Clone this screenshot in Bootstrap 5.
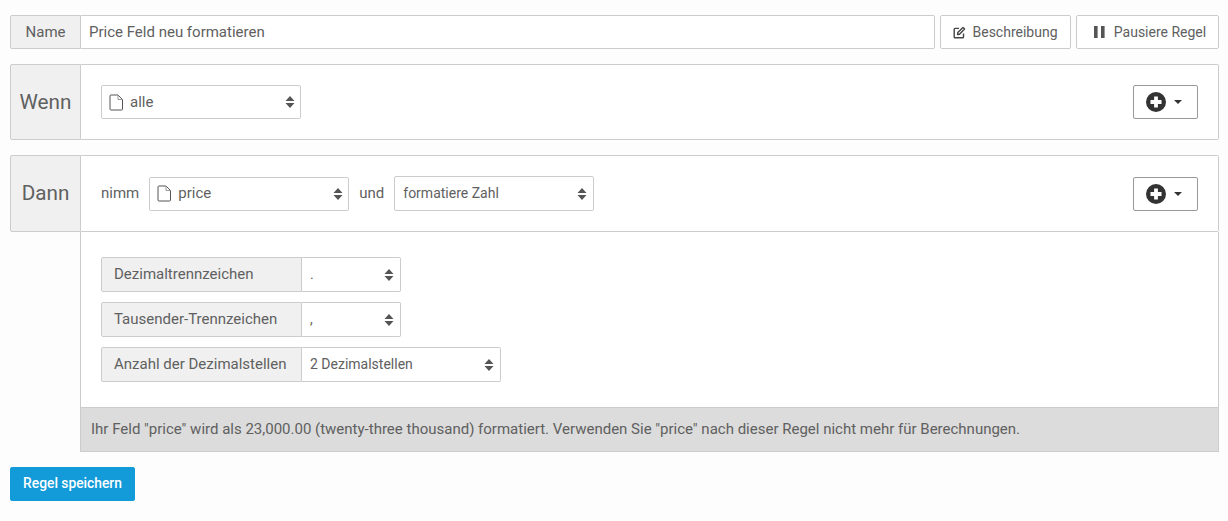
<!DOCTYPE html>
<html lang="de">
<head>
<meta charset="utf-8">
<title>Regel</title>
<link href="https://cdn.jsdelivr.net/npm/bootstrap@5.3.0/dist/css/bootstrap.min.css" rel="stylesheet">
<style>
html,body{height:521px;overflow:hidden}
body{background:#fdfdfd;font-family:Roboto,"Liberation Sans",sans-serif;font-size:15px;color:#606060}
.page-wrap{padding:15px 9px 0 10px}
.tag-cell{background:#f0f0f0;border:1px solid #ccc;color:#606060;display:flex;align-items:center;justify-content:center;border-radius:2px 0 0 2px}
.name-row{height:34px;margin-bottom:15px;gap:5px}
.name-tag{width:71px;font-size:15px}
.name-input{flex:1;height:34px;border:1px solid #ccc;border-left:0;background:#fff;color:#606060;padding:0 8px;font-size:15px;border-radius:0 2px 2px 0;margin-left:-5px;display:flex;align-items:center}
.plain-btn{height:34px;background:#fff;border:1px solid #ccc;border-radius:2px;color:#606060;font-size:14px;padding:0;display:flex;align-items:center;justify-content:center}
.btn-desc{width:131px;gap:6px}
.btn-pause{width:143px;gap:9px;padding-left:5px}
.rule-row{height:76px;margin-bottom:15px}
.rule-row.then-row{height:77px;margin-bottom:0}
.rule-tag{width:71px;font-size:20.7px;padding-top:1px}
.rule-body{flex:1;background:#fff;border:1px solid #ccc;border-left:0;border-radius:0 2px 2px 0;padding:0 20px;display:flex;align-items:center}
.fake-select{position:relative;height:34px;background:#fff;border:1px solid #ccc;border-radius:2px;color:#606060;display:flex;align-items:center;padding-left:7px;gap:7px}
.sel-tall{height:35px;padding-left:8px;font-size:14px}
.sel-tall .updown{right:6px}
.w-200{width:200px}.w-100px{width:100px}
.w-199{width:199px}.w-99{width:99px}
.updown{position:absolute;right:5px;top:50%;margin-top:-6px}
.word{margin:0 10px;color:#606060}
.word-first{margin:0 10px 0 0}
.add-btn{margin-left:auto;width:65px;height:34px;background:#fff;border:1px solid #999;border-radius:2px;display:flex;align-items:center;justify-content:center;gap:8px;padding:0 3px 0 0}
.caret-down{width:0;height:0;border:4.5px solid transparent;border-top-color:#333;border-bottom:0}
.detail-panel{margin-left:70px;background:#fff;border:1px solid #ccc;border-top:0}
.detail-inner{padding:25px 20px;display:flex;flex-direction:column;gap:10px}
.opt-group{display:flex;height:35px}
.opt-label{width:201px;background:#f0f0f0;border:1px solid #ccc;color:#606060;display:flex;align-items:center;padding-left:12px;border-radius:2px 0 0 2px}
.opt-group .fake-select{height:35px;border-left:0;border-radius:0 2px 2px 0;font-size:14px;padding-left:8px}
.opt-group .updown{right:6px}
.note-bar{background:#dcdcdc;height:45px;display:flex;align-items:center;padding-left:10px;border-top:1px solid #ccc;margin:0 -1px -1px;border-left:1px solid #ccc;border-right:1px solid #ccc;border-bottom:1px solid #ccc}
.save-btn{margin-top:15px;width:125px;height:34px;background:#129ad9;border:1px solid #129ad9;color:#fff;font-size:13.8px;font-weight:500;border-radius:2px;padding:0 0 2px}
</style>
</head>
<body>
<div class="page-wrap">
  <div class="d-flex name-row">
    <div class="tag-cell name-tag">Name</div>
    <div class="name-input">Price Feld neu formatieren</div>
    <button class="plain-btn btn-desc" type="button">
      <svg width="13" height="13" viewBox="0 0 13 13" fill="none" stroke="#444" stroke-width="1.4"><path d="M10.5 7.5v3.5a.8.8 0 0 1-.8.8H2a.8.8 0 0 1-.8-.8V3.2a.8.8 0 0 1 .8-.8h4"/><path d="M4.8 6.6 10 1.5l1.6 1.6-5.1 5.2-1.9.3z" stroke-linejoin="round"/></svg>
      Beschreibung
    </button>
    <button class="plain-btn btn-pause" type="button">
      <svg width="11" height="12" viewBox="0 0 11 12" fill="#555"><rect x="0" y="0" width="3.6" height="12"/><rect x="7" y="0" width="3.6" height="12"/></svg>
      Pausiere Regel
    </button>
  </div>

  <div class="d-flex rule-row">
    <div class="tag-cell rule-tag">Wenn</div>
    <div class="rule-body">
      <div class="fake-select w-200">
        <svg width="14" height="17" viewBox="0 0 14 17" fill="none" stroke="#555"><path d="M1 2a1 1 0 0 1 1-1h7l4.500 4.500V15a1 1 0 0 1-1 1H2a1 1 0 0 1-1-1z"/><path d="M9 1v4.500h4.500" stroke="#999"/></svg>
        <span>alle</span>
        <svg class="updown" width="10" height="12" viewBox="0 0 10 12" fill="#555"><path d="M5 0 9.5 5H.5zM5 12 .5 7h9z"/></svg>
      </div>
      <button class="add-btn" type="button">
        <svg width="20" height="20" viewBox="0 0 20 20"><circle cx="10" cy="10" r="10" fill="#333"/><path d="M10 4.500v11M4.500 10h11" stroke="#fff" stroke-width="3.8"/></svg>
        <span class="caret-down"></span>
      </button>
    </div>
  </div>

  <div class="d-flex rule-row then-row">
    <div class="tag-cell rule-tag">Dann</div>
    <div class="rule-body">
      <span class="word-first">nimm</span>
      <div class="fake-select w-200">
        <svg width="14" height="17" viewBox="0 0 14 17" fill="none" stroke="#555"><path d="M1 2a1 1 0 0 1 1-1h7l4.500 4.500V15a1 1 0 0 1-1 1H2a1 1 0 0 1-1-1z"/><path d="M9 1v4.500h4.500" stroke="#999"/></svg>
        <span>price</span>
        <svg class="updown" width="10" height="12" viewBox="0 0 10 12" fill="#555"><path d="M5 0 9.5 5H.5zM5 12 .5 7h9z"/></svg>
      </div>
      <span class="word">und</span>
      <div class="fake-select w-200 sel-tall">
        <span>formatiere Zahl</span>
        <svg class="updown" width="10" height="12" viewBox="0 0 10 12" fill="#555"><path d="M5 0 9.5 5H.5zM5 12 .5 7h9z"/></svg>
      </div>
      <button class="add-btn" type="button">
        <svg width="20" height="20" viewBox="0 0 20 20"><circle cx="10" cy="10" r="10" fill="#333"/><path d="M10 4.500v11M4.500 10h11" stroke="#fff" stroke-width="3.8"/></svg>
        <span class="caret-down"></span>
      </button>
    </div>
  </div>

  <div class="detail-panel">
    <div class="detail-inner">
      <div class="opt-group">
        <div class="opt-label">Dezimaltrennzeichen</div>
        <div class="fake-select w-99"><span>.</span><svg class="updown" width="10" height="12" viewBox="0 0 10 12" fill="#555"><path d="M5 0 9.5 5H.5zM5 12 .5 7h9z"/></svg></div>
      </div>
      <div class="opt-group">
        <div class="opt-label">Tausender-Trennzeichen</div>
        <div class="fake-select w-99"><span>,</span><svg class="updown" width="10" height="12" viewBox="0 0 10 12" fill="#555"><path d="M5 0 9.5 5H.5zM5 12 .5 7h9z"/></svg></div>
      </div>
      <div class="opt-group">
        <div class="opt-label">Anzahl der Dezimalstellen</div>
        <div class="fake-select w-199"><span>2 Dezimalstellen</span><svg class="updown" width="10" height="12" viewBox="0 0 10 12" fill="#555"><path d="M5 0 9.5 5H.5zM5 12 .5 7h9z"/></svg></div>
      </div>
    </div>
    <div class="note-bar">Ihr Feld "price" wird als 23,000.00 (twenty-three thousand) formatiert. Verwenden Sie "price" nach dieser Regel nicht mehr für Berechnungen.</div>
  </div>

  <button class="save-btn" type="button">Regel speichern</button>
</div>
</body>
</html>
